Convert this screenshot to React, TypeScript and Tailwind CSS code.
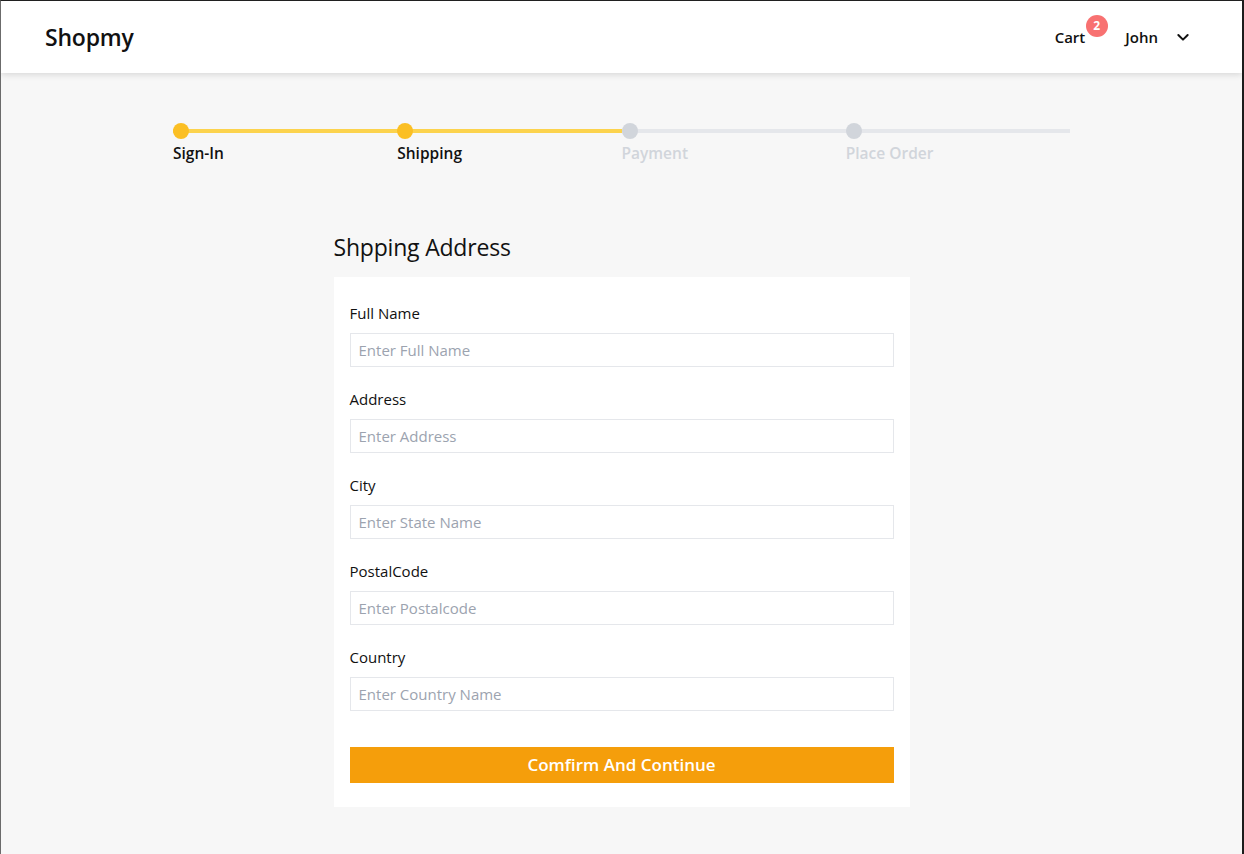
import React from "react";

const font = { fontFamily: '"Open Sans", "Noto Sans", sans-serif' };

const steps = [
  { label: "Sign-In", active: true, lineActive: true },
  { label: "Shipping", active: true, lineActive: true },
  { label: "Payment", active: false, lineActive: false },
  { label: "Place Order", active: false, lineActive: false },
];

const fields = [
  { label: "Full Name", ph: "Enter Full Name" },
  { label: "Address", ph: "Enter Address" },
  { label: "City", ph: "Enter State Name" },
  { label: "PostalCode", ph: "Enter Postalcode" },
  { label: "Country", ph: "Enter Country Name" },
];

export default function App() {
  return (
    <div
      className="w-[1244px] h-[854px] overflow-hidden bg-[#f7f7f7] border-t border-t-[#202020] border-l border-l-[#6b6b6b] border-r-2 border-r-[#1c1c1c] flex flex-col text-[#111]"
      style={font}
    >
      <header className="h-[72px] shrink-0 bg-white shadow-[0_2px_6px_rgba(0,0,0,0.12)] flex items-center justify-between pl-[44px] pr-[51px] relative z-10">
        <div className="text-[23px] font-semibold tracking-[-0.2px]">Shopmy</div>
        <div className="flex items-center text-[15px] font-semibold">
          <div className="relative">
            <span>Cart</span>
            <span className="absolute left-[31px] top-[-11px] w-[22px] h-[22px] rounded-full bg-[#f87171] text-white text-[12px] font-bold flex items-center justify-center">
              2
            </span>
          </div>
          <span className="ml-[40px]">John</span>
          <svg className="ml-[17px]" width="16" height="16" viewBox="0 0 24 24" fill="none" stroke="#111" strokeWidth="3" strokeLinecap="round" strokeLinejoin="round">
            <path d="M5 9l7 7 7-7" />
          </svg>
        </div>
      </header>

      <main className="flex-1 flex flex-col items-center">
        <div className="w-[897px] flex mt-[50px]">
          {steps.map((s) => (
            <div key={s.label} className="flex-1 flex flex-col">
              <div className="relative h-[16px] flex items-center">
                <div className={`h-[4px] w-full ${s.lineActive ? "bg-[#fcd34d]" : "bg-[#e5e7eb]"}`} />
                <div className={`absolute left-0 top-0 w-[16px] h-[16px] rounded-full ${s.active ? "bg-[#fbbf24]" : "bg-[#d1d5db]"}`} />
              </div>
              <div className={`mt-[2px] text-[15.5px] leading-[24px] font-semibold ${s.active ? "text-[#111]" : "text-[#d1d5db]"}`}>
                {s.label}
              </div>
            </div>
          ))}
        </div>

        <div className="w-[576px] mt-[66px]">
          <h1 className="text-[23px] leading-[32px] font-normal mb-[14px] tracking-[-0.2px]">Shpping Address</h1>
          <div className="bg-white px-[16px] pt-[24px] pb-[24px]">
            <div className="flex flex-col gap-[20px]">
              {fields.map((f) => (
                <div key={f.label} className="flex flex-col">
                  <label className="text-[15px] leading-[24px] mb-[8px]">{f.label}</label>
                  <input
                    placeholder={f.ph}
                    className="h-[34px] border border-[#e5e7eb] px-[8px] text-[15px] outline-none placeholder:text-[#9ca3af]"
                    style={font}
                  />
                </div>
              ))}
            </div>
            <button className="mt-[36px] w-full h-[36px] bg-[#f59e0b] text-white text-[17px] font-semibold" style={font}>
              Comfirm And Continue
            </button>
          </div>
        </div>
      </main>
    </div>
  );
}
